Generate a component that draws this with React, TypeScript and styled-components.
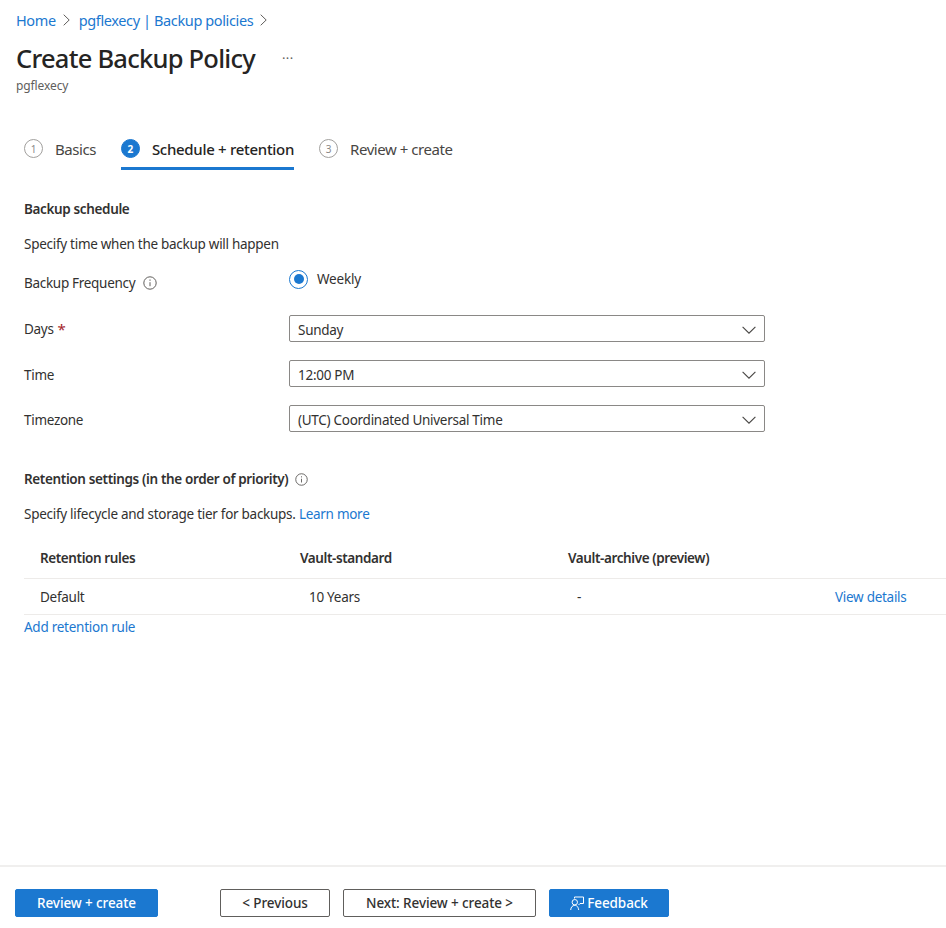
import React from 'react'
import styled, { createGlobalStyle } from 'styled-components'

const Global = createGlobalStyle`
  html, body {
    margin: 0;
    padding: 0;
    background: #fff;
  }
  body {
    font-family: "Noto Sans", "Open Sans", sans-serif;
    font-size: 13.5px;
    color: #323130;
    overflow: hidden;
  }
`

const Page = styled.div`
  width: 946px;
  height: 928px;
  display: flex;
  flex-direction: column;
`

const Header = styled.header`
  padding: 10px 16px 0;
`

const Crumbs = styled.nav`
  display: flex;
  align-items: center;
  gap: 7px;
  height: 20px;
  font-size: 14.5px;
  letter-spacing: -0.38px;
  color: #1b78d0;
  svg {
    margin-right: 2px;
  }
`

const TitleRow = styled.div`
  display: flex;
  align-items: center;
  margin-top: 9px;
`

const Title = styled.h1`
  margin: 0;
  font-size: 25.5px;
  line-height: 38px;
  font-weight: 500;
  letter-spacing: -0.76px;
  color: #252423;
`

const More = styled.span`
  margin-left: 27px;
  font-size: 13px;
  letter-spacing: 0.5px;
  line-height: 20px;
  color: #605e5c;
`

const Subtitle = styled.div`
  margin-top: 1px;
  font-size: 12px;
  line-height: 16px;
  letter-spacing: -0.1px;
  color: #605e5c;
`

const Tabs = styled.div`
  display: flex;
  gap: 25px;
  margin: 36px 0 0 24px;
  height: 40px;
`

const Tab = styled.div<{ $active?: boolean }>`
  display: flex;
  align-items: center;
  gap: 12px;
  height: 40px;
  box-sizing: border-box;
  font-size: 15px;
  letter-spacing: ${(p) => (p.$active ? '-0.3px' : '-0.45px')};
  font-weight: ${(p) => (p.$active ? 500 : 400)};
  color: ${(p) => (p.$active ? '#252423' : '#484644')};
  border-bottom: 3px solid ${(p) => (p.$active ? '#1b78d0' : 'transparent')};
`

const StepBadge = styled.span<{ $active?: boolean }>`
  width: 19px;
  height: 19px;
  box-sizing: border-box;
  border-radius: 50%;
  display: flex;
  align-items: center;
  justify-content: center;
  font-size: 10px;
  letter-spacing: 0;
  font-weight: ${(p) => (p.$active ? 700 : 400)};
  color: ${(p) => (p.$active ? '#fff' : '#8a8886')};
  background: ${(p) => (p.$active ? '#1b78d0' : '#fff')};
  border: 1.5px solid ${(p) => (p.$active ? '#1b78d0' : '#a19f9d')};
`

const Content = styled.main`
  flex: 1;
  padding: 29px 0 0 24px;
`

const SectionTitle = styled.h2`
  margin: 0;
  display: flex;
  align-items: center;
  gap: 7px;
  font-size: 13.5px;
  line-height: 20px;
  font-weight: 600;
  letter-spacing: -0.36px;
  color: #323130;
`

const Note = styled.p`
  margin: 15px 0 0;
  line-height: 20px;
  letter-spacing: -0.28px;
`

const Link = styled.a`
  color: #1b78d0;
`

const FieldRow = styled.div<{ $top: number }>`
  display: grid;
  grid-template-columns: 265px 476px;
  align-items: center;
  height: 27px;
  margin-top: ${(p) => p.$top}px;
`

const Label = styled.label<{ $drop?: boolean }>`
  display: flex;
  align-items: center;
  gap: 8px;
  padding-top: ${(p) => (p.$drop ? 2 : 0)}px;
  letter-spacing: -0.3px;
`

const Required = styled.span`
  color: #a4262c;
  font-size: 15px;
  line-height: 14px;
  margin-left: -4px;
`

const RadioWrap = styled.div`
  display: flex;
  align-items: center;
  gap: 9px;
  margin-top: -7px;
  letter-spacing: -0.2px;
`

const Radio = styled.span`
  width: 19px;
  height: 19px;
  box-sizing: border-box;
  border: 1.5px solid #1b78d0;
  border-radius: 50%;
  display: flex;
  align-items: center;
  justify-content: center;
  &::after {
    content: '';
    width: 10px;
    height: 10px;
    border-radius: 50%;
    background: #1b78d0;
  }
`

const Select = styled.div`
  height: 27px;
  box-sizing: border-box;
  border: 1px solid #8a8886;
  border-radius: 2px;
  padding: 2px 8px 0;
  display: flex;
  align-items: center;
  justify-content: space-between;
  letter-spacing: -0.28px;
`

const RetentionBlock = styled.section`
  margin-top: 37px;
`

const Table = styled.div`
  margin-top: 14px;
`

const TableRow = styled.div<{ $head?: boolean }>`
  display: grid;
  grid-template-columns: 260px 268px 267px 1fr;
  align-items: center;
  height: ${(p) => (p.$head ? 40 : 35)}px;
  padding-left: 16px;
  border-bottom: 1px solid #edebe9;
  letter-spacing: ${(p) => (p.$head ? '-0.4px' : '-0.28px')};
  font-weight: ${(p) => (p.$head ? 600 : 400)};
`

const ValueCell = styled.span`
  padding-left: 9px;
`

const AddRule = styled(Link)`
  display: block;
  line-height: 20px;
  margin-top: 2px;
  letter-spacing: -0.26px;
`

const Footer = styled.footer`
  height: 63px;
  box-sizing: border-box;
  border-top: 2px solid #f0efee;
  padding: 22px 0 0 15px;
  display: flex;
  align-items: flex-start;
`

const Button = styled.button<{ $primary?: boolean; $width: number; $left: number }>`
  width: ${(p) => p.$width}px;
  height: 28px;
  margin-left: ${(p) => p.$left}px;
  box-sizing: border-box;
  border-radius: 2px;
  padding: 0;
  display: flex;
  align-items: center;
  justify-content: center;
  gap: 3px;
  font-family: inherit;
  font-size: 13.5px;
  font-weight: 500;
  letter-spacing: -0.1px;
  color: ${(p) => (p.$primary ? '#fff' : '#323130')};
  background: ${(p) => (p.$primary ? '#1b78d0' : '#fff')};
  border: 1px solid ${(p) => (p.$primary ? '#1b78d0' : '#605e5c')};
`

const InfoIcon = ({ size = 14 }: { size?: number }) => (
  <svg width={size} height={size} viewBox="0 0 14 14" fill="none" stroke="#605e5c">
    <circle cx="7" cy="7" r="6.2" strokeWidth="1" />
    <path d="M7 6.2v4" strokeWidth="1" />
    <path d="M7 3.6v1.1" strokeWidth="1.1" />
  </svg>
)

const FeedbackIcon = () => (
  <svg width="14" height="15" viewBox="0 0 14 15" fill="none" stroke="#fff" strokeWidth="1">
    <path d="M4.5 2.5V1h9v6.5H10L8.5 9" />
    <circle cx="4.8" cy="6.2" r="2.7" />
    <path d="M0.7 14c.2-2.8 1.6-4.6 4.1-4.6 1.9 0 3.3 1 3.9 4.6" />
  </svg>
)

const CrumbChevron = () => (
  <svg width="7" height="12" viewBox="0 0 7 12" fill="none" stroke="#605e5c" strokeWidth="1">
    <path d="M0.7 0.7 6.2 6 0.7 11.3" />
  </svg>
)

const SelectChevron = () => (
  <svg width="14" height="8" viewBox="0 0 14 8" fill="none" stroke="#484644" strokeWidth="1.1">
    <path d="M0.6 0.8 7 7.2 13.4 0.8" />
  </svg>
)

const SelectField = ({ value }: { value: string }) => (
  <Select>
    {value}
    <SelectChevron />
  </Select>
)

const App = () => {
  return (
    <Page>
      <Global />
      <Header>
        <Crumbs>
          Home
          <CrumbChevron />
          pgflexecy | Backup policies
          <CrumbChevron />
        </Crumbs>
        <TitleRow>
          <Title>Create Backup Policy</Title>
          <More>···</More>
        </TitleRow>
        <Subtitle>pgflexecy</Subtitle>
      </Header>
      <Tabs>
        <Tab>
          <StepBadge>1</StepBadge>
          Basics
        </Tab>
        <Tab $active>
          <StepBadge $active>2</StepBadge>
          Schedule + retention
        </Tab>
        <Tab>
          <StepBadge>3</StepBadge>
          Review + create
        </Tab>
      </Tabs>
      <Content>
        <SectionTitle>Backup schedule</SectionTitle>
        <Note>Specify time when the backup will happen</Note>
        <FieldRow $top={15}>
          <Label>
            Backup Frequency <InfoIcon />
          </Label>
          <RadioWrap>
            <Radio />
            Weekly
          </RadioWrap>
        </FieldRow>
        <FieldRow $top={19}>
          <Label>
            Days <Required>*</Required>
          </Label>
          <SelectField value="Sunday" />
        </FieldRow>
        <FieldRow $top={18}>
          <Label $drop>Time</Label>
          <SelectField value="12:00 PM" />
        </FieldRow>
        <FieldRow $top={18}>
          <Label $drop>Timezone</Label>
          <SelectField value="(UTC) Coordinated Universal Time" />
        </FieldRow>
        <RetentionBlock>
          <SectionTitle>
            Retention settings (in the order of priority) <InfoIcon size={13} />
          </SectionTitle>
          <Note>
            Specify lifecycle and storage tier for backups. <Link>Learn more</Link>
          </Note>
          <Table>
            <TableRow $head>
              <span>Retention rules</span>
              <span>Vault-standard</span>
              <span>Vault-archive (preview)</span>
              <span />
            </TableRow>
            <TableRow>
              <span>Default</span>
              <ValueCell>10 Years</ValueCell>
              <ValueCell>-</ValueCell>
              <Link>View details</Link>
            </TableRow>
          </Table>
          <AddRule>Add retention rule</AddRule>
        </RetentionBlock>
      </Content>
      <Footer>
        <Button $primary $width={143} $left={0}>
          Review + create
        </Button>
        <Button $width={110} $left={62}>
          &lt; Previous
        </Button>
        <Button $width={193} $left={13}>
          Next: Review + create &gt;
        </Button>
        <Button $primary $width={120} $left={13}>
          <FeedbackIcon />
          Feedback
        </Button>
      </Footer>
    </Page>
  )
}

export default App
